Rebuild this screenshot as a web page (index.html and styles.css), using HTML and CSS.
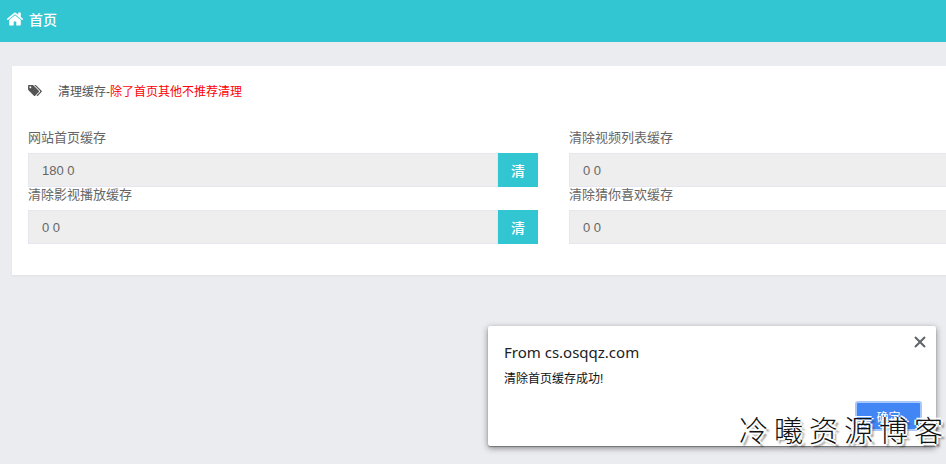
FILE: index.html
```html
<!DOCTYPE html>
<html lang="zh-CN">
<head>
<meta charset="utf-8">
<title>首页</title>
<link rel="stylesheet" href="styles.css">
</head>
<body>
<header class="topbar">
  <svg class="home-icon" viewBox="0 0 1664 1792" width="18" height="18" aria-hidden="true"><path fill="currentColor" d="M1408 992v480q0 26-19 45t-45 19H960v-384H704v384H320q-26 0-45-19t-19-45V992q0-1 .5-3t.5-3l575-474 575 474q1 2 1 6zm223-69l-62 74q-8 9-21 11h-3q-13 0-21-7L832 424 140 1001q-12 8-24 7-13-2-21-11l-62-74q-8-10-7-23.500T37 878L756 279q32-26 76-26t76 26l244 204V288q0-14 9-23t23-9h192q14 0 23 9t9 23v408l219 182q10 8 11 21.500t-7 22.500z"/></svg>
  <span class="topbar-title">首页</span>
</header>
<main class="content">
  <section class="card">
    <div class="card-title">
      <svg class="tags-icon" viewBox="0 0 1920 1792" width="14" height="13" aria-hidden="true"><path fill="currentColor" d="M448 448q0-53-37.500-90.500T320 320t-90.500 37.500T192 448t37.500 90.500T320 576t90.500-37.500T448 448zm1067 576q0 53-37 90l-491 492q-39 37-91 37-53 0-90-37L91 890q-38-37-64.500-101T0 672V256q0-52 38-90t90-38h416q53 0 117 26.500T763 219l715 714q37 39 37 91zm384 0q0 53-37 90l-491 492q-39 37-91 37-36 0-59-14t-53-45l470-470q37-37 37-90 0-52-37-91L923 219q-38-38-102-64.500T704 128h224q53 0 117 26.500T1147 219l715 714q37 39 37 91z"/></svg>
      <span>清理缓存-</span><span class="warn">除了首页其他不推荐清理</span>
    </div>
    <div class="form-grid">
      <div class="field">
        <label class="field-label">网站首页缓存</label>
        <div class="input-group"><div class="input">180 0</div><button class="clear-btn">清</button></div>
      </div>
      <div class="field">
        <label class="field-label">清除视频列表缓存</label>
        <div class="input-group"><div class="input">0 0</div><button class="clear-btn">清</button></div>
      </div>
      <div class="field">
        <label class="field-label">清除影视播放缓存</label>
        <div class="input-group"><div class="input">0 0</div><button class="clear-btn">清</button></div>
      </div>
      <div class="field">
        <label class="field-label">清除猜你喜欢缓存</label>
        <div class="input-group"><div class="input">0 0</div><button class="clear-btn">清</button></div>
      </div>
    </div>
  </section>
</main>
<div class="dialog">
  <div class="dialog-origin">From cs.osqqz.com</div>
  <div class="dialog-msg">清除首页缓存成功!</div>
  <svg class="dialog-close" viewBox="0 0 12 12" width="12" height="12" aria-hidden="true"><path d="M1 1l10 10M11 1L1 11" stroke="currentColor" stroke-width="2" fill="none"/></svg>
  <button class="dialog-ok">确定</button>
</div>
<div class="watermark">冷曦资源博客</div>
</body>
</html>
```
FILE: styles.css
```css
* { box-sizing: border-box; }
html, body { margin: 0; height: 100%; overflow: hidden; }
body {
  width: 946px;
  height: 464px;
  position: relative;
  background: #ebecf0;
  color: #666;
  font-family: "Liberation Sans", "Noto Sans CJK SC", sans-serif;
  font-size: 13px;
}
.topbar {
  height: 42px;
  background: #32c6d3;
  color: #fff;
  display: flex;
  align-items: center;
  padding-left: 6px;
  gap: 5px;
  font-size: 14px;
  font-weight: 500;
}
.home-icon { display: block; margin-top: -5px; }
.topbar-title { margin-top: -4px; }
.content { padding: 24px 0 0 12px; }
.card {
  width: 1100px;
  height: 209px;
  background: #fff;
  padding: 16px;
  box-shadow: 0 1px 2px rgba(0, 0, 0, 0.05);
}
.card-title {
  display: flex;
  align-items: center;
  height: 16px;
  color: #555;
  font-size: 12px;
}
.tags-icon { color: #555; margin-right: 16px; }
.warn { color: #f00; }
.form-grid {
  display: grid;
  grid-template-columns: 510px 510px;
  column-gap: 31px;
  margin-top: 32px;
}
.field-label {
  display: block;
  height: 23px;
  line-height: 16px;
  font-size: 13px;
  color: #666;
}
.input-group { display: flex; height: 34px; }
.input {
  flex: 1;
  background: #eee;
  border: 1px solid #e5e6ef;
  padding-left: 13px;
  line-height: 33px;
  font-size: 13px;
  color: #666;
}
.clear-btn {
  width: 40px;
  border: 0;
  padding: 0;
  background: #32c6d3;
  color: #fff;
  font: inherit;
  font-size: 14px;
  font-weight: 500;
}
.dialog {
  position: absolute;
  left: 488px;
  top: 326px;
  width: 448px;
  height: 120px;
  background: #fff;
  border-radius: 2px;
  box-shadow: 0 1px 1px rgba(0,0,0,.3), 0 2px 6px rgba(0,0,0,.45);
  color: #000;
}
.dialog-origin {
  position: absolute;
  left: 16px;
  top: 16px;
  font-family: "Noto Sans", "Liberation Sans", sans-serif;
  font-size: 15px;
  line-height: 20px;
  color: #202124;
}
.dialog-msg {
  position: absolute;
  left: 16px;
  top: 45px;
  font-size: 12px;
  line-height: 16px;
  color: #111;
}
.dialog-close {
  position: absolute;
  right: 10px;
  top: 10px;
  color: #5f6368;
}
.dialog-ok {
  position: absolute;
  left: 367px;
  top: 75px;
  width: 67px;
  height: 30px;
  background: #4285f4;
  border: 2px solid #a8c7fa;
  border-radius: 3px;
  color: #fff;
  font: inherit;
  font-size: 12px;
}
.watermark {
  position: absolute;
  left: 739px;
  top: 409px;
  font-family: "Noto Sans CJK SC", sans-serif;
  font-size: 29px;
  font-weight: 300;
  line-height: 40px;
  letter-spacing: 6px;
  white-space: nowrap;
  color: #111;
  text-shadow: 2px 0 0 #fff, -2px 0 0 #fff, 0 2px 0 #fff, 0 -2px 0 #fff, 3px 3px 2px rgba(0,0,0,.5);
}
```
